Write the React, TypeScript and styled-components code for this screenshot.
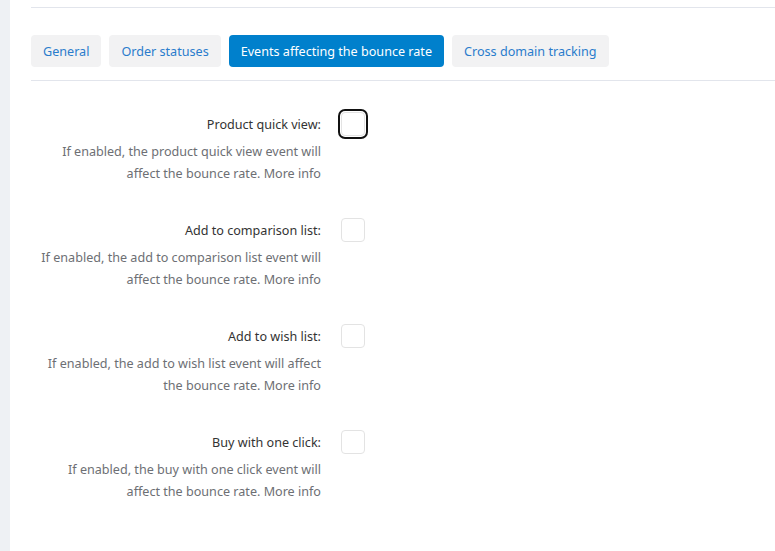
import React from "react";
import styled, { createGlobalStyle } from "styled-components";

const Global = createGlobalStyle`
  html, body { margin: 0; padding: 0; background: #fff; }
  body { font-family: "Noto Sans", "Open Sans", sans-serif; }
  * { box-sizing: border-box; }
`;

const Page = styled.div`
  display: flex;
  width: 775px;
  height: 551px;
  overflow: hidden;
  background: #fff;
`;

const Rail = styled.div`
  width: 10px;
  flex: none;
  background: #eef1f4;
`;

const Main = styled.div`
  flex: 1;
  padding: 7px 0 0 21px;
`;

const TopRule = styled.div`
  height: 1px;
  background: #e2e5ec;
`;

const Tabs = styled.div`
  display: flex;
  gap: 8px;
  margin-top: 27px;
  padding-bottom: 13px;
  border-bottom: 1px solid #e2e5ec;
`;

const Tab = styled.button<{ $active?: boolean }>`
  height: 32px;
  padding: 0 12px;
  border: none;
  border-radius: 4px;
  font-family: inherit;
  font-size: 12.6px;
  color: ${(p) => (p.$active ? "#fff" : "#2a7ccc")};
  background: ${(p) => (p.$active ? "#0080cc" : "#f2f2f3")};
  cursor: pointer;
`;

const Form = styled.div`
  display: flex;
  flex-direction: column;
  gap: 35px;
  padding-top: 33px;
`;

const Row = styled.div`
  display: flex;
  align-items: flex-start;
`;

const LabelCol = styled.div`
  width: 290px;
  flex: none;
  text-align: right;
`;

const Label = styled.div`
  font-size: 12.6px;
  line-height: 22px;
  color: #333;
  margin-bottom: 5px;
`;

const Help = styled.div`
  font-size: 12.6px;
  line-height: 22px;
  color: #6d6f74;
`;

const Line = styled.span`
  display: block;
  white-space: nowrap;
`;

const Check = styled.span<{ $focus?: boolean }>`
  display: block;
  width: 24px;
  height: 24px;
  margin: -2px 0 0 20px;
  border: 1px solid #e3e3e3;
  border-radius: 4px;
  background: #fff;
  box-shadow: ${(p) => (p.$focus ? "0 0 0 1px #fff, 0 0 0 3px #111" : "none")};
`;

const rows = [
  { label: "Product quick view:", lines: ["If enabled, the product quick view event will", "affect the bounce rate. More info"], focus: true },
  { label: "Add to comparison list:", lines: ["If enabled, the add to comparison list event will", "affect the bounce rate. More info"] },
  { label: "Add to wish list:", lines: ["If enabled, the add to wish list event will affect", "the bounce rate. More info"] },
  { label: "Buy with one click:", lines: ["If enabled, the buy with one click event will", "affect the bounce rate. More info"] },
];

export default function App() {
  return (
    <Page>
      <Global />
      <Rail />
      <Main>
        <TopRule />
        <Tabs>
          <Tab>General</Tab>
          <Tab>Order statuses</Tab>
          <Tab $active>Events affecting the bounce rate</Tab>
          <Tab>Cross domain tracking</Tab>
        </Tabs>
        <Form>
          {rows.map((r) => (
            <Row key={r.label}>
              <LabelCol>
                <Label>{r.label}</Label>
                <Help>
                  {r.lines.map((l) => (
                    <Line key={l}>{l}</Line>
                  ))}
                </Help>
              </LabelCol>
              <Check $focus={r.focus} role="checkbox" aria-checked="false" />
            </Row>
          ))}
        </Form>
      </Main>
    </Page>
  );
}
